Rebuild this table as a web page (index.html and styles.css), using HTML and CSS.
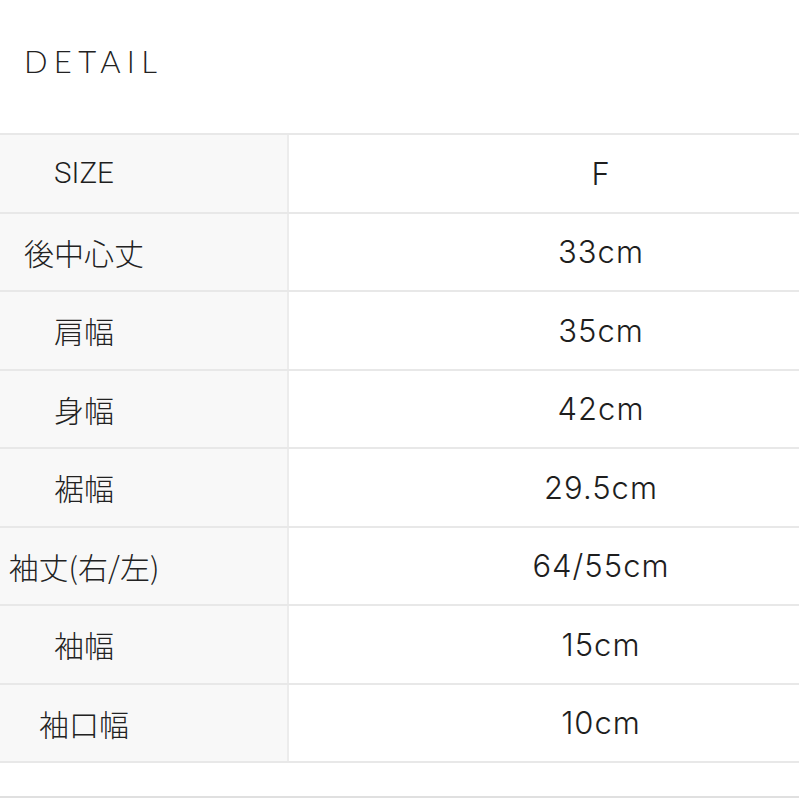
FILE: index.html
```html
<!DOCTYPE html>
<html lang="ja">
<head>
<meta charset="utf-8">
<link rel="stylesheet" href="styles.css">
</head>
<body>
<div class="page">
  <h2 class="title">DETAIL</h2>
  <div class="table">
    <div class="row"><div class="key latin">SIZE</div><div class="val">F</div></div>
    <div class="row"><div class="key">後中心丈</div><div class="val">33cm</div></div>
    <div class="row"><div class="key">肩幅</div><div class="val">35cm</div></div>
    <div class="row"><div class="key">身幅</div><div class="val">42cm</div></div>
    <div class="row"><div class="key">裾幅</div><div class="val">29.5cm</div></div>
    <div class="row"><div class="key">袖丈(右/左)</div><div class="val">64/55cm</div></div>
    <div class="row"><div class="key">袖幅</div><div class="val">15cm</div></div>
    <div class="row"><div class="key">袖口幅</div><div class="val">10cm</div></div>
  </div>
  <div class="next"></div>
</div>
</body>
</html>
```
FILE: styles.css
```css
html, body {
  margin: 0;
  padding: 0;
  background: #fff;
}
.page {
  width: 799px;
  height: 799px;
  overflow: hidden;
  color: #222;
}
.title {
  margin: 0;
  height: 134px;
  box-sizing: border-box;
  padding: 42px 0 0 24px;
  font-family: "Lato", "Noto Sans", sans-serif;
  font-weight: 300;
  font-size: 31px;
  line-height: 38px;
  letter-spacing: 6.3px;
  color: #222;
}
.table {
  border-top: 2px solid #e8e8e8;
  margin-top: -1px;
}
.row {
  display: grid;
  grid-template-columns: 289px 1fr;
  height: 76.5px;
  border-bottom: 2px solid #e8e8e8;
}
.key {
  background: #f8f8f8;
  border-right: 2px solid #ececec;
  display: flex;
  align-items: center;
  justify-content: center;
  padding-right: 119px;
  font-family: "Noto Sans CJK JP", "Noto Sans", sans-serif;
  font-weight: 300;
  font-size: 30px;
  color: #222;
  white-space: nowrap;
}
.key.latin {
  font-family: "Roboto", "Noto Sans CJK JP", sans-serif;
  font-weight: 300;
  font-size: 29.5px;
  color: #1e1e1e;
}
.val {
  display: flex;
  align-items: center;
  justify-content: center;
  padding-left: 114px;
  font-family: "Inter", "Noto Sans", sans-serif;
  font-weight: 300;
  font-size: 31px;
  letter-spacing: 1px;
  color: #1e1e1e;
}
.next {
  margin-top: 33px;
  border-top: 2px solid #e0e0e0;
}
```
